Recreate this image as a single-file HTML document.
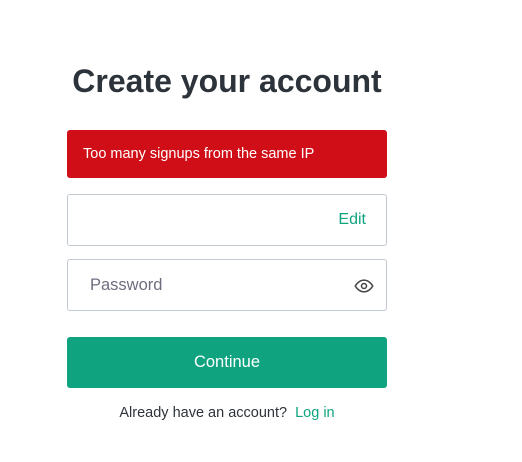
<!DOCTYPE html>
<html><head><style>
body{margin:0;width:522px;height:462px;background:#fff;font-family:"Liberation Sans",sans-serif;position:relative;overflow:hidden}
.a{position:absolute}
h1{position:absolute;left:0;width:454px;top:61px;margin:0;text-align:center;font-size:32px;font-weight:bold;color:#2d333a;line-height:40px}
.err{left:67px;top:130px;width:320px;height:48px;background:#d00e17;border-radius:3px;color:#fff;font-size:14.5px;line-height:48px;box-sizing:border-box;padding-left:16px}
.in{left:67px;width:320px;height:52px;border:1px solid #c2c8d0;border-radius:3px;box-sizing:border-box}
.btn{left:67px;top:337px;width:320px;height:51px;background:#10a37f;border-radius:3px;color:#fff;font-size:16.5px;text-align:center;line-height:51px}
</style></head><body>
<h1>Create your account</h1>
<div class="a err">Too many signups from the same IP</div>
<div class="a in" style="top:194px"><span class="a" style="right:20px;top:16px;color:#10a37f;font-size:16px">Edit</span></div>
<div class="a in" style="top:259px"><span class="a" style="left:22px;top:16px;color:#6e6e80;font-size:16.5px">Password</span>
<svg class="a" style="right:12px;top:16px" width="20" height="20" viewBox="0 0 24 24" fill="none" stroke="#444" stroke-width="1.8"><path d="M1.5 12S5.5 5 12 5s10.5 7 10.5 7-4 7-10.5 7S1.5 12 1.5 12z"/><circle cx="12" cy="12" r="3"/></svg></div>
<div class="a btn">Continue</div>
<div class="a" style="left:0;width:454px;top:405px;text-align:center;font-size:14.5px;color:#2d333a">Already have an account?&nbsp; <span style="color:#10a37f">Log in</span></div>
</body></html>
